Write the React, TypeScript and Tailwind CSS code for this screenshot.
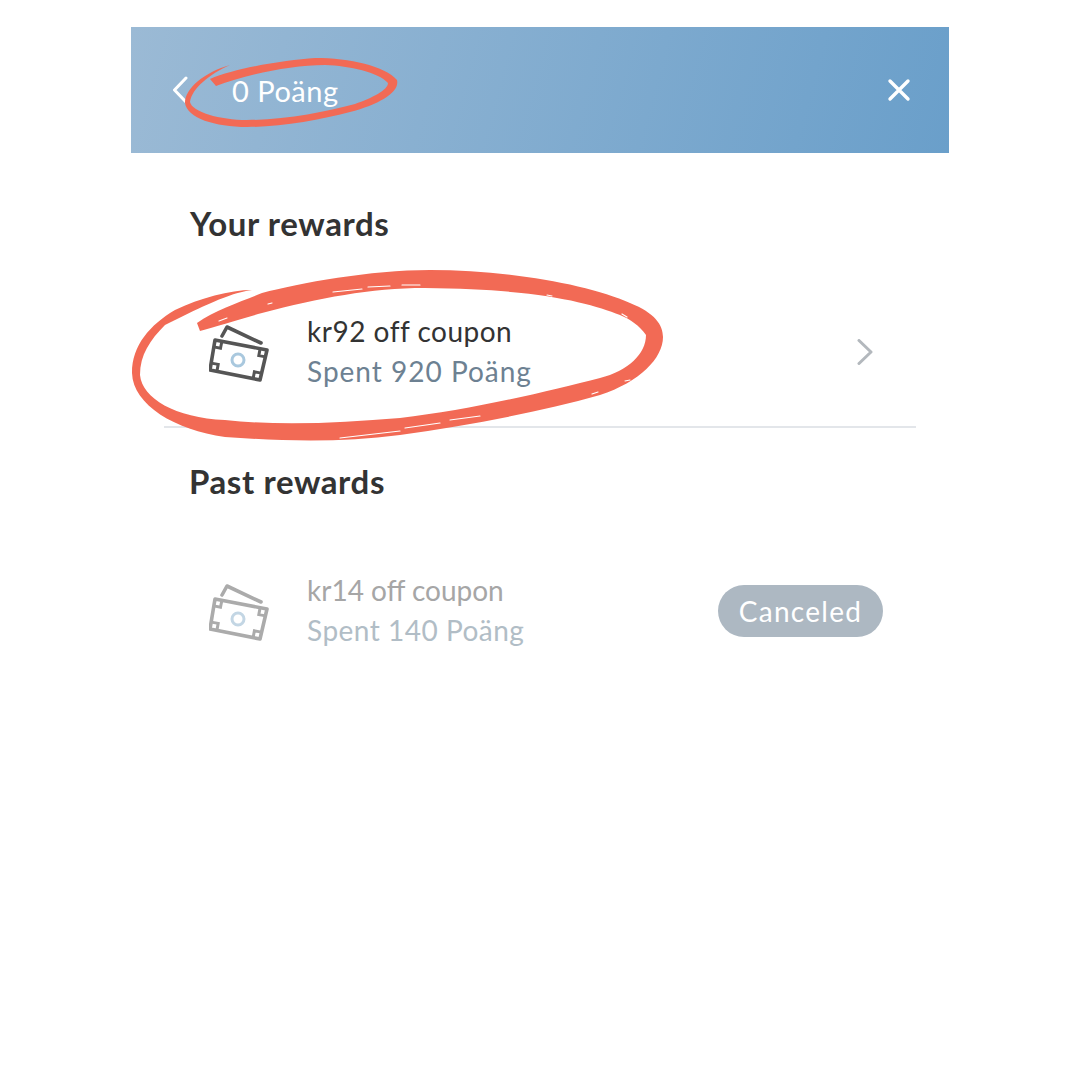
import React from 'react';

function MoneyIcon({ dark, accent }: { dark: string; accent: string }) {
  return (
    <svg width="60" height="60" viewBox="0 0 60 60" fill="none" className="shrink-0 mt-[8px]">
      <g stroke={dark} strokeWidth="3.6" strokeLinejoin="round" strokeLinecap="round">
        <path d="M6 15 L58 25 L51 55 L1 45 Z" />
        <path d="M13 11 L18 2 L52 18" />
      </g>
      <g stroke={dark} strokeWidth="3">
        <path d="M12.9 16.3 L11.5 23.2 L4.7 21.9" />
        <path d="M51.1 23.7 L49.8 30.6 L56.7 31.9" />
        <path d="M44.1 53.7 L45.4 46.8 L52.3 48.1" />
        <path d="M7.9 46.3 L9.2 39.4 L2.3 38.1" />
      </g>
      <circle cx="29" cy="35" r="6" stroke={accent} strokeWidth="3" />
    </svg>
  );
}

function Scribbles() {
  return (
    <svg width="1080" height="1080" viewBox="0 0 1080 1080" className="absolute inset-0 pointer-events-none">
      <path
        fill="#f26a55"
        d="M197 323 C215 310 245 300 262 293 C300 283 370 270 430 270 C510 270 590 285 630 303 C655 313 663 325 663 337 C663 358 640 382 600 395 C540 412 470 425 400 435 C340 443 280 441 225 437 C175 430 133 405 132 373 C132 345 150 325 175 310 C200 298 230 290 252 290 L246 291 C225 295 195 310 165 325 C150 340 140 355 140 375 C142 398 175 418 225 420 C280 426 340 423 400 418 C470 410 550 391 600 378 C628 371 646 354 646 335 C640 326 630 319 620 315 C590 303 540 289 425 288 C370 288 320 298 262 313 C240 319 215 327 200 331 Z"
      />
      <path
        fill="#f26a55"
        d="M210 79 C235 68 285 60 315 58 C350 58 385 66 397 80 C400 92 380 104 350 112 C320 120 280 127 247 127 C215 127 187 118 185 103 C185 88 205 72 230 65 C210 74 192 88 190 102 C192 112 220 120 247 120 C285 120 325 112 355 104 C372 98 388 90 388 83 C378 72 350 66 325 65 C290 65 245 75 216 86 Z"
      />
      <g stroke="#fff" strokeWidth="1.2" strokeLinecap="round">
        <path d="M333 292 L362 289 M368 287 L390 286 M402 285 L420 285" />
        <path d="M268 304 L272 303 M219 321 L227 318" />
        <path d="M547 295 L552 296 M622 314 L627 317" />
        <path d="M340 438 L400 431 M405 428 L440 423 M450 420 L480 416" />
        <path d="M592 394 L598 392 M625 381 L630 380" />
      </g>
    </svg>
  );
}

export default function App() {
  return (
    <div className="relative w-[1080px] h-[1080px] bg-white overflow-hidden font-['Lato',sans-serif]">
      <div className="ml-[131px] mt-[27px] w-[818px]">
        <header className="h-[126px] flex items-center justify-between pl-[41px] pr-[38px] bg-linear-[105deg] from-[#9bbad5] to-[#6a9fca]">
          <div className="flex items-center">
            <svg width="16" height="28" viewBox="0 0 16 28" fill="none">
              <path d="M14 2 L2.5 14 L14 26" stroke="#fff" strokeWidth="3" strokeLinecap="round" strokeLinejoin="round" />
            </svg>
            <span className="ml-[44px] text-[29px] leading-none tracking-[0.5px] text-white">0 Poäng</span>
          </div>
          <svg width="24" height="24" viewBox="0 0 24 24" fill="none">
            <path d="M3 3 L21 21 M21 3 L3 21" stroke="#fff" strokeWidth="3.4" strokeLinecap="round" />
          </svg>
        </header>

        <div className="px-[33px]">
          <h2 className="mt-[50px] pl-[26px] h-[40px] text-[33px] leading-[40px] tracking-[0.6px] font-bold text-[#333333]">Your rewards</h2>
          <div className="flex items-center h-[185px] pt-[33px] pl-[45px] pr-[43px] border-b-2 border-[#e3e6ea]">
            <MoneyIcon dark="#555555" accent="#a9c8de" />
            <div className="ml-[38px] flex-1">
              <div className="text-[28px] leading-[40px] tracking-[0.5px] text-[#333333]">kr92 off coupon</div>
              <div className="text-[28px] leading-[40px] tracking-[1px] text-[#6d8192]">Spent 920 Poäng</div>
            </div>
            <svg width="16" height="26" viewBox="0 0 16 26" fill="none" className="mt-[2px]">
              <path d="M2 1.5 L14 13 L2 24.5" stroke="#b3b8bd" strokeWidth="3" strokeLinecap="round" strokeLinejoin="round" />
            </svg>
          </div>

          <h2 className="mt-[33px] pl-[25px] h-[40px] text-[33px] leading-[40px] tracking-[0.6px] font-bold text-[#333333]">Past rewards</h2>
          <div className="flex items-center h-[183px] pt-[35px] pl-[45px] pr-[33px]">
            <MoneyIcon dark="#ababab" accent="#c3d6e4" />
            <div className="ml-[38px] flex-1">
              <div className="text-[28px] leading-[40px] text-[#a6a6a6]">kr14 off coupon</div>
              <div className="text-[28px] leading-[40px] tracking-[0.5px] text-[#b1bdc6]">Spent 140 Poäng</div>
            </div>
            <span className="mt-[2px] flex items-center justify-center w-[165px] h-[52px] rounded-full bg-[#adb8c2] text-[28px] tracking-[1.3px] text-white">Canceled</span>
          </div>
        </div>
      </div>
      <Scribbles />
    </div>
  );
}
